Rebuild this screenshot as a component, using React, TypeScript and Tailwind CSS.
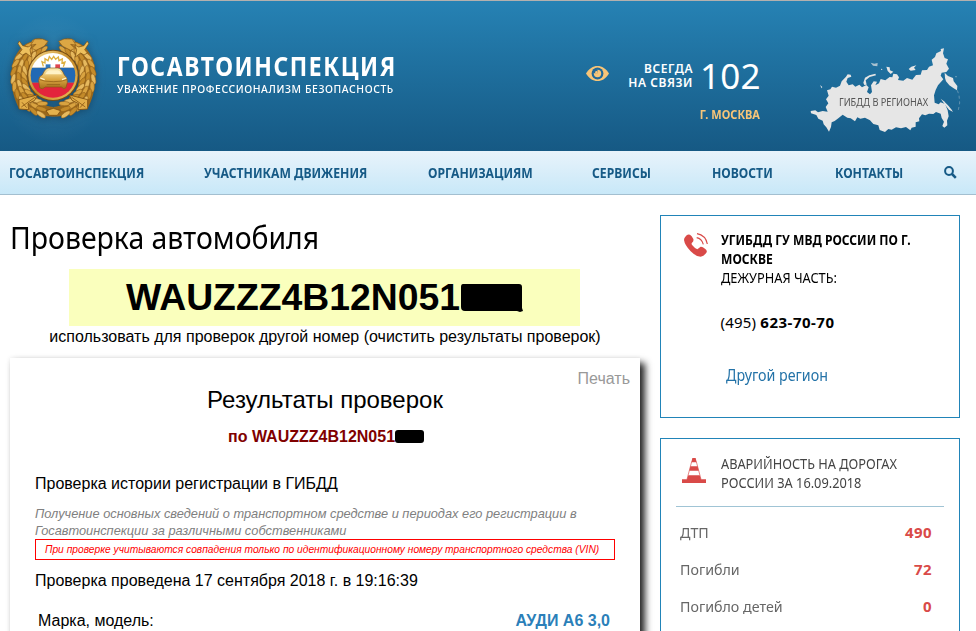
import React from 'react';

const navItems = [
  { label: 'ГОСАВТОИНСПЕКЦИЯ', width: 'w-[195px]' },
  { label: 'УЧАСТНИКАМ ДВИЖЕНИЯ', width: 'w-[223.5px]' },
  { label: 'ОРГАНИЗАЦИЯМ', width: 'w-[164px]' },
  { label: 'СЕРВИСЫ', width: 'w-[120.5px]' },
  { label: 'НОВОСТИ', width: 'w-[123px]' },
  { label: 'КОНТАКТЫ', width: 'w-[109px]' },
];

const stats = [
  { label: 'ДТП', value: '490' },
  { label: 'Погибли', value: '72' },
  { label: 'Погибло детей', value: '0' },
];

// Leaves of the laurel wreath, placed along three rows on each half
const leaves = [0, 1, 2].flatMap((row) =>
  Array.from({ length: 13 }, (_, i) => {
    const angle = 110 + row * 2 + i * 11.5;
    const rad = (angle * Math.PI) / 180;
    const radius = 86 + row * 16;
    return {
      x: 160 + Math.cos(rad) * radius * 1.02,
      y: 158 - Math.sin(rad) * radius,
      turn: -angle + 66 + row * 20,
      tone: (i + row) % 3,
    };
  })
);

const tones = ['#d9a340', '#c48b2a', '#e6b95e'];

const Wreath = () => (
  <g>
    <path d="M144 58 C95 34 55 65 40 110 C27 160 36 215 58 254 L104 258 C125 276 145 277 160 277 L160 248 C100 240 78 190 84 145 C88 105 105 80 144 58Z" fill="#9a681b" />
    {leaves.map((leaf, i) => (
      <ellipse
        key={i}
        cx={leaf.x}
        cy={leaf.y}
        rx="16"
        ry="6.5"
        fill={tones[leaf.tone]}
        stroke="#8d5c18"
        strokeWidth="1.6"
        transform={`rotate(${leaf.turn} ${leaf.x} ${leaf.y})`}
      />
    ))}
    <path d="M104 44 L128 44 L144 51 L132 66 L108 78 L96 72 L108 60 L92 62Z" fill="#dca744" stroke="#8d5c18" strokeWidth="2" />
    <path d="M58 50 L68 64 L84 68 L96 62 L90 76 L94 98 L78 86 L68 92 L58 86 L66 76 L54 58Z" fill="#edc05d" stroke="#7d4e10" strokeWidth="2" />
    <path d="M57 226 L112 212 L104 228 L84 238 L86 256 L57 254Z" fill="#e2ae48" stroke="#7d4e10" strokeWidth="2.5" />
    <path d="M64 248 L106 218 M66 234 L80 250" stroke="#8a5814" strokeWidth="2.5" />
  </g>
);

const Emblem = () => (
  <svg className="h-[84px] w-[90px] shrink-0 overflow-visible drop-shadow-[0_1px_4px_rgba(10,50,80,0.6)]" viewBox="24 38 270 252">
    <defs>
      <linearGradient id="ring" x1="0" y1="0" x2="1" y2="1">
        <stop offset="0" stopColor="#fbe093" />
        <stop offset="0.5" stopColor="#c48a28" />
        <stop offset="1" stopColor="#f0c160" />
      </linearGradient>
      <linearGradient id="car" x1="0" y1="0" x2="0" y2="1">
        <stop offset="0" stopColor="#fff0b5" />
        <stop offset="0.55" stopColor="#dba642" />
        <stop offset="1" stopColor="#a36c1a" />
      </linearGradient>
      <clipPath id="disc">
        <circle cx="159" cy="153" r="67" />
      </clipPath>
    </defs>
    <Wreath />
    <g transform="translate(320 0) scale(-1 1)">
      <Wreath />
    </g>
    <circle cx="159" cy="153" r="77" fill="#7d4e10" />
    <circle cx="159" cy="153" r="74" fill="url(#ring)" />
    <g clipPath="url(#disc)">
      <path d="M80 70H240V130H80Z" fill="#fff" />
      <path d="M80 130H240V175H80Z" fill="#2269b4" />
      <path d="M80 175H240V230H80Z" fill="#e3243c" />
    </g>
    <path d="M130 126 L126 112 L135 116 L135 103 L144 109 L148 97 L155 105 L161 96 L167 105 L175 98 L177 109 L187 104 L186 116 L195 113 L190 127" fill="none" stroke="#deb03f" strokeWidth="4" />
    <path d="M137 120H152V131H137Z" fill="#3478bd" />
    <path d="M152 120H166V131H152Z" fill="#fff" />
    <path d="M166 120H180V131H166Z" fill="#df4650" />
    <path d="M127 152 Q136 131 146 131 H174 Q184 131 193 152 Q203 159 202 174 L198 190 Q192 197 184 188 H136 Q126 198 119 190 L116 168 Q117 155 127 152Z" fill="url(#car)" stroke="#8a5814" strokeWidth="2" />
    <path d="M135 150 Q141 139 148 138 H174 Q181 140 186 150Z" fill="#fff2c6" />
    <path d="M119 166 Q132 172 160 172 Q188 172 200 166 M140 181H180" fill="none" stroke="#8a5814" strokeWidth="2" />
    <path d="M121 161 L134 166 M199 161 L186 166" stroke="#fff5cf" strokeWidth="4" />
    <path d="M138 259 L160 252 L182 259 L172 273 L148 273Z" fill="#e4b14c" stroke="#7d4e10" strokeWidth="2.5" />
  </svg>
);

const EyeIcon = () => (
  <svg className="h-[15px] w-[23px] shrink-0" viewBox="0 0 23 15">
    <path d="M0 7.5C3 2.5 7 0 11.5 0S20 2.5 23 7.5C20 12.5 16 15 11.5 15S3 12.5 0 7.5Z" fill="#f7c578" />
    <circle cx="11.5" cy="7.5" r="5.9" fill="#20699a" />
    <circle cx="11.5" cy="7.5" r="3.7" fill="#f7c578" />
    <path d="M11.5 7.2V3.4H7.6V7.2Z" fill="#20699a" />
    <circle cx="10.4" cy="6.2" r="1.2" fill="#f7c578" />
  </svg>
);

const RegionsMap = () => (
  <div className="relative h-[110px] w-[180px]">
    <svg className="h-full w-full" viewBox="0 0 540 330" fill="#e6e6e6">
      <path d="M44 228 L58 226 L66 232 L80 228 L95 230 L89 216 L97 205 L90 193 L98 182 L93 166 L103 163 L108 155 L120 158 L132 152 L137 139 L150 125 L155 118 L164 119 L166 125 L155 129 L151 140 L158 151 L170 148 L178 155 L190 149 L198 157 L211 150 L218 157 L213 171 L222 178 L228 171 L225 151 L233 139 L243 140 L238 151 L249 145 L254 132 L268 136 L281 126 L289 127 L292 116 L303 118 L309 127 L306 135 L322 137 L333 129 L349 134 L360 120 L374 119 L378 106 L393 105 L399 95 L411 91 L407 74 L417 66 L421 55 L435 48 L434 42 L444 40 L441 55 L446 69 L456 73 L451 86 L459 101 L451 111 L437 113 L434 122 L442 133 L426 151 L419 165 L414 181 L416 203 L428 208 L434 202 L447 207 L455 226 L458 244 L453 257 L454 271 L445 278 L439 273 L444 260 L437 249 L434 236 L420 231 L412 237 L399 236 L388 241 L378 238 L369 250 L370 259 L359 262 L359 275 L347 278 L343 286 L330 276 L315 280 L300 277 L287 284 L277 282 L267 291 L251 285 L247 271 L232 267 L222 256 L207 248 L193 251 L184 247 L177 259 L164 250 L154 248 L140 239 L127 250 L116 258 L107 262 L105 276 L99 290 L91 277 L83 268 L80 257 L67 251 L61 240 L45 235Z" />
      <path d="M446 113 L456 123 L471 129 L473 139 L484 153 L483 166 L473 160 L460 151 L450 139 L447 129Z" />
      <path d="M202 143 L207 128 L220 121 L238 116 L240 121 L221 126 L209 136 L212 149 L205 150Z" />
      <path d="M271 95 L281 97 L282 106 L292 110 L284 117 L275 108Z" />
      <path d="M338 102 L346 95 L361 91 L354 98 L359 105 L344 107Z" />
      <path d="M224 83 L235 86 L245 84 L244 94 L231 92Z" opacity="0.7" />
      <path d="M434 191 L444 199 L458 213 L467 224 L471 231 L459 224 L448 211Z" />
      <path d="M72 150 L79 156 L77 160Z" />
      <path d="M233 166 L245 157 L253 145 L256 151 L241 170 L232 179 L227 176Z" />
      <path d="M484 166 L489 180 L491 204 L487 225" fill="none" stroke="#e6e6e6" strokeWidth="2" strokeDasharray="9 8" opacity="0.5" />
      <circle cx="257" cy="103" r="2" />
      <circle cx="480" cy="125" r="2" opacity="0.6" />
    </svg>
    <span className="absolute top-[59px] left-[43px] origin-left scale-x-[0.918] text-[10px] leading-4 whitespace-nowrap text-[#555]">
      ГИБДД В РЕГИОНАХ
    </span>
  </div>
);

const Header = () => (
  <header className="flex h-[151px] border-t border-[#b3b0ae] bg-linear-to-b from-[#2682b4] to-[#165984]">
    <div className="flex w-[117px] bg-radial-[at_45%_52%] from-white/10 to-transparent to-60% pt-[36px] pl-[8px]">
      <Emblem />
    </div>
    <div className="w-[469px] pt-[49px] text-white">
      <div className="h-8 origin-left scale-x-[0.88] text-[26px] leading-8 font-bold tracking-[1.8px] whitespace-nowrap">ГОСАВТОИНСПЕКЦИЯ</div>
      <div className="h-[14px] origin-left scale-x-[0.9] text-[11.5px] leading-[14px] font-medium tracking-[0.67px] whitespace-nowrap">
        УВАЖЕНИЕ ПРОФЕССИОНАЛИЗМ БЕЗОПАСНОСТЬ
      </div>
    </div>
    <div className="w-[210px] pt-[55px]">
      <div className="flex h-10 items-center">
        <div className="-mt-[5px]">
          <EyeIcon />
        </div>
        <div className="w-[84px] text-right text-[12px] leading-[14px] font-semibold tracking-[0.55px] whitespace-nowrap text-white">
          ВСЕГДА
          <br />
          НА СВЯЗИ
        </div>
        <div className="ml-[7px] text-[35px] leading-10 tracking-[0.2px] text-white">102</div>
      </div>
      <div className="mt-[11px] w-[174px] origin-right scale-x-[0.92] text-right text-[12px] leading-4 font-bold text-[#f7c578]">Г. МОСКВА</div>
    </div>
    <div className="pt-[34px]">
      <RegionsMap />
    </div>
  </header>
);

const Nav = () => (
  <nav className="flex h-11 items-center border-b border-[#a3bfd0] bg-linear-to-b from-[#e8f3fb] to-[#c8e8f8] pl-[9px] text-[14px] font-bold text-[#165a86]">
    {navItems.map((item) => (
      <a key={item.label} href="#" className={item.width}>
        <span className="inline-block origin-left scale-x-[0.868] whitespace-nowrap">{item.label}</span>
      </a>
    ))}
    <svg className="h-[13px] w-[13px]" viewBox="0 0 13 13" fill="none" stroke="#165a86">
      <circle cx="5" cy="5" r="3.9" strokeWidth="2" />
      <path d="M8 8L11.8 11.8" strokeWidth="2.5" />
    </svg>
  </nav>
);

const Results = () => (
  <section className="mt-[11px] h-[300px] w-[630px] bg-white pt-[11px] pr-[10px] pl-[25px] text-[16px] leading-5 shadow-[0_0_5px_rgba(0,0,0,0.08),5px_5px_7px_rgba(0,0,0,0.85)]">
    <div className="text-right text-[#999]">Печать</div>
    <h2 className="-ml-[15px] text-center text-[24px] leading-[22px]">Результаты проверок</h2>
    <div className="mt-4 flex h-5 items-center pl-[193px] font-bold text-[#800000]">
      <span>по WAUZZZ4B12N051</span>
      <span className="-mt-[2px] h-[13px] w-[29px] rounded-[3px] bg-black"></span>
    </div>
    <h3 className="mt-[27px]">Проверка истории регистрации в ГИБДД</h3>
    <p className="mt-[11px] w-[570px] text-[12.8px] leading-[17px] text-[#808080] italic">
      Получение основных сведений о транспортном средстве и периодах его регистрации в Госавтоинспекции за различными собственниками
    </p>
    <div className="h-[21px] w-[580px] border border-[#f00] pl-[9px] text-[10.24px] leading-[19px] whitespace-nowrap text-[#f00] italic">
      При проверке учитываются совпадения только по идентификационному номеру транспортного средства (VIN)
    </div>
    <p className="mt-[11px]">Проверка проведена 17 сентября 2018 г. в 19:16:39</p>
    <div className="mt-5 flex justify-between pr-5 pl-[3px]">
      <span>Марка, модель:</span>
      <span className="font-bold text-[#2b7fb9]">АУДИ А6 3,0</span>
    </div>
  </section>
);

const DutyOffice = () => (
  <section className="flex h-[203px] w-[300px] border border-[#2184b8] pt-[14px] text-[14px] leading-[19px]">
    <div className="w-[59.5px] pt-[3px] pl-[23px]">
      <svg className="h-6 w-6" viewBox="0 0 72 72" fill="#d94a48">
        <path d="M4 11 Q10 2 18 5 Q23 8 28 18 Q30 24 24 29 Q21 32 25 37 Q33 47 40 49 Q45 45 50 41 Q55 40 63 47 Q70 52 68 58 Q62 69 50 71 Q34 70 20 55 Q2 36 0 21 Q0 15 4 11Z" />
        <path d="M38 14 Q53 17 58 34 M39 2 Q65 7 70 33" fill="none" stroke="#d94a48" strokeWidth="3.5" />
      </svg>
    </div>
    <div>
      <div className="origin-left scale-x-[0.862] font-bold whitespace-nowrap">
        УГИБДД ГУ МВД РОССИИ ПО Г.
        <br />
        МОСКВЕ
      </div>
      <div className="origin-left scale-x-[0.915] whitespace-nowrap">ДЕЖУРНАЯ ЧАСТЬ:</div>
      <div className="mt-[25px] text-[15px] leading-5 tracking-[0.2px]">
        (495) <b className="tracking-[0.5px]">623-70-70</b>
      </div>
      <a href="#" className="mt-[33px] ml-[5px] block origin-left scale-x-[0.92] text-[15.5px] leading-5 text-[#2473a8]">
        Другой регион
      </a>
    </div>
  </section>
);

const Accidents = () => (
  <section className="mt-5 h-[260px] w-[300px] border border-[#2184b8] px-[15px] pt-[15px]">
    <div className="flex h-[53px] border-b border-[#a0c4d5] text-[14px] leading-[19px] text-[#444]">
      <div className="w-[44.5px] pt-1 pl-[6px]">
        <svg className="h-[25px] w-6" viewBox="0 0 72 75" fill="#d94a48">
          <path d="M31 0H41L44 13H28Z" />
          <path d="M25 25H47L50 38H22Z" />
          <path d="M19 52H53L57 64H72V75H0V64H15Z" />
          <path d="M29 11L15 64M43 11L57 64" stroke="#d94a48" strokeWidth="2" />
        </svg>
      </div>
      <div className="origin-left scale-x-[0.913] whitespace-nowrap">
        АВАРИЙНОСТЬ НА ДОРОГАХ
        <br />
        РОССИИ ЗА 16.09.2018
      </div>
    </div>
    <div className="mt-[7px] pr-3 pl-[4px] text-[15px] text-[#666]">
      {stats.map((row) => (
        <div key={row.label} className="flex h-[37px] items-center justify-between">
          <span className="origin-left scale-x-[0.95]">{row.label}</span>
          <span className="font-bold tracking-[0.4px] text-[#d94a48]">{row.value}</span>
        </div>
      ))}
    </div>
  </section>
);

export default function App() {
  return (
    <div className="h-[631px] w-[976px] overflow-hidden bg-white font-['Noto_Sans',sans-serif] text-black">
      <Header />
      <Nav />
      <main className="flex gap-5 pl-[10px]">
        <div className="w-[630px] shrink-0 font-['Liberation_Sans',sans-serif]">
          <h1 className="mt-[22px] h-[52px] origin-left scale-x-[0.931] font-['Noto_Sans',sans-serif] text-[30.5px] leading-[41px] whitespace-nowrap">
            Проверка автомобиля
          </h1>
          <div className="ml-[59px] flex h-[57px] w-[511px] items-center bg-[#faffbd] pl-[57px] text-[37.33px] leading-none font-bold">
            <span>WAUZZZ4B12N051</span>
            <svg className="h-7 w-[63px]" viewBox="0 0 63 28">
              <path d="M3 0H59Q62 0 62 3V24L63 27L60 28L57 27H5Q1 27 1 23V3Q1 0 3 0Z" />
            </svg>
          </div>
          <div className="text-center text-[16px] leading-[21px]">использовать для проверок другой номер (очистить результаты проверок)</div>
          <Results />
        </div>
        <aside className="mt-5 shrink-0">
          <DutyOffice />
          <Accidents />
        </aside>
      </main>
    </div>
  );
}
